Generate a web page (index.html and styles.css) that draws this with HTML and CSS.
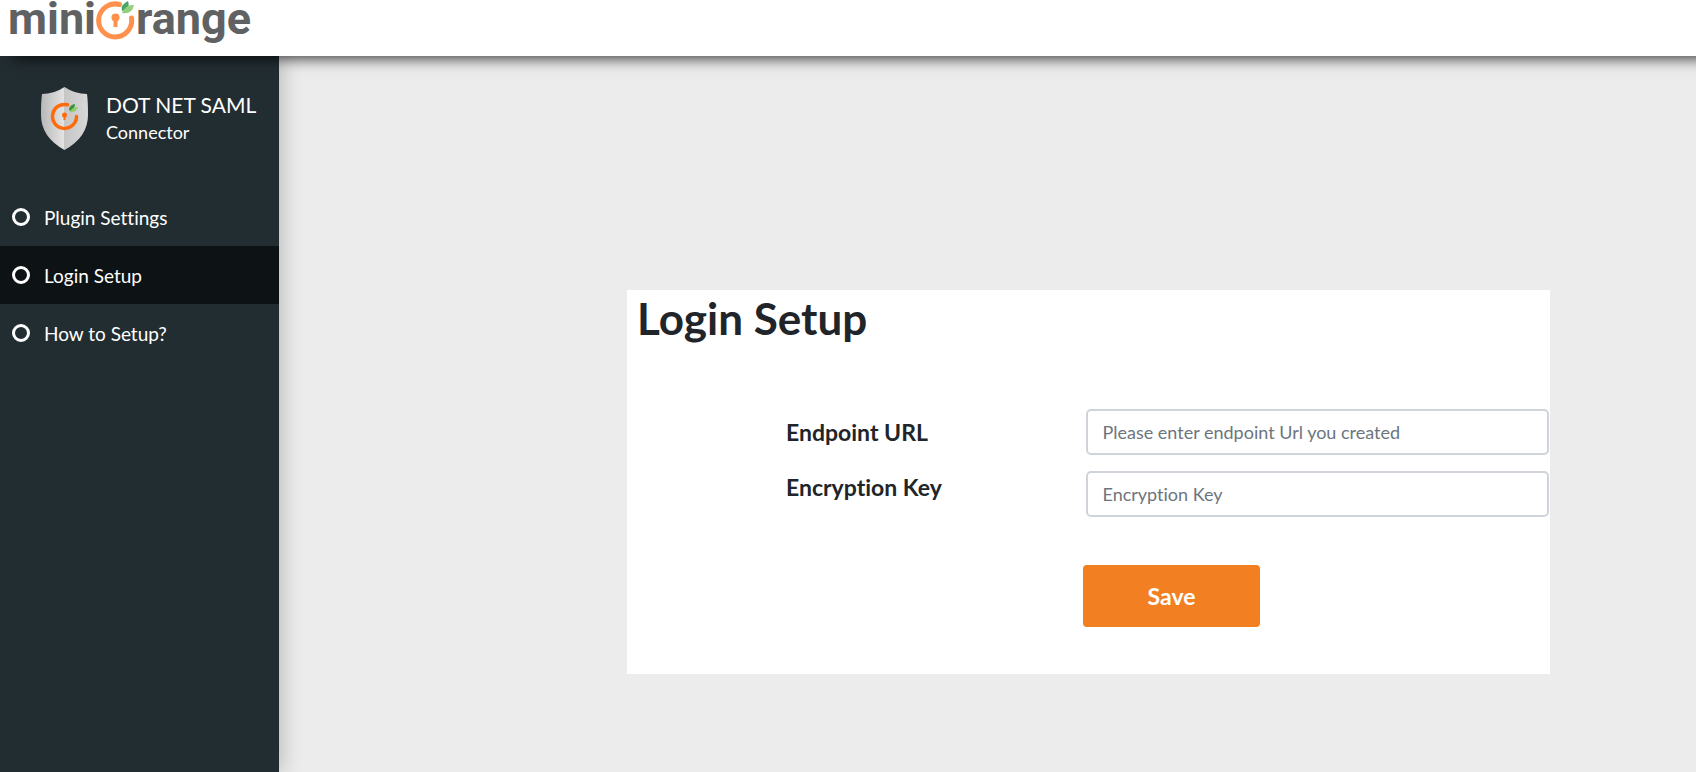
FILE: index.html
```html
<!DOCTYPE html>
<html lang="en">
<head>
<meta charset="utf-8">
<meta name="viewport" content="width=device-width, initial-scale=1">
<title>Login Setup - miniOrange</title>
<link rel="stylesheet" href="styles.css">
</head>
<body>
<header class="topbar">
  <div class="logo">
    <span>mini</span>
    <svg class="logo-mark" viewBox="0 0 40 42" role="img" aria-label="O">
      <path d="M23.500 4.500A16.500 16.500 0 1 0 35.500 18" fill="none" stroke="#ff914d" stroke-width="5" stroke-linecap="round"/>
      <circle cx="19.500" cy="17.500" r="4" fill="#ff914d"/>
      <path d="M17.500 18h4v9h-4z" fill="#ff914d"/>
      <path d="M26 11Q24 5 32 1Q34 7 30 10Z" fill="#4aa564"/>
      <path d="M26 13Q30 4 38 5Q36 15 26 13Z" fill="#93d07c"/>
    </svg>
    <span>range</span>
  </div>
</header>
<div class="layout">
  <aside class="sidebar">
    <div class="brand">
      <svg class="shield" viewBox="0 0 47 63" aria-hidden="true">
        <defs>
          <linearGradient id="steel">
            <stop offset="0" stop-color="#b8b8b8"/>
            <stop offset=".5" stop-color="#e4e4e4"/>
            <stop offset=".5" stop-color="#c6c6c6"/>
            <stop offset="1" stop-color="#d8d8d8"/>
          </linearGradient>
        </defs>
        <path d="M23.500 0Q34 7 46 7Q47 14 47 28Q47 50 23.500 63Q0 50 0 28Q0 14 1 7Q13 7 23.500 0Z" fill="url(#steel)"/>
        <path d="M26.500 17.800A12 12 0 1 0 35.500 29.500" fill="none" stroke="#ff6a0a" stroke-width="3.500" stroke-linecap="round"/>
        <circle cx="23.500" cy="28" r="2.500" fill="#ff6a0a"/>
        <path d="M22.500 28h2v5h-2z" fill="#ff6a0a"/>
        <path d="M28 23Q28 18 34 17Q34 21 30 24Z" fill="#3f8f3b"/>
        <path d="M29 25Q31 20 37 20Q35 26 29 25Z" fill="#8fd06a"/>
      </svg>
      <div class="brand-text">
        <div class="brand-name">DOT NET SAML</div>
        <div class="brand-sub">Connector</div>
      </div>
    </div>
    <nav class="menu">
      <a class="menu-item" href="#settings"><span class="ring"></span>Plugin Settings</a>
      <a class="menu-item active" href="#login" aria-current="page"><span class="ring"></span>Login Setup</a>
      <a class="menu-item" href="#how-to"><span class="ring"></span>How to Setup?</a>
    </nav>
  </aside>
  <main class="content">
    <form class="card">
      <h1 class="title">Login Setup</h1>
      <div class="fields">
        <div class="labels">
          <label for="endpoint">Endpoint URL</label>
          <label for="key">Encryption Key</label>
        </div>
        <div class="inputs">
          <input id="endpoint" type="text" placeholder="Please enter endpoint Url you created">
          <input id="key" type="text" placeholder="Encryption Key">
        </div>
      </div>
      <div class="actions">
        <button class="save" type="button">Save</button>
      </div>
    </form>
  </main>
</div>
</body>
</html>
```
FILE: styles.css
```css
* {
  box-sizing: border-box;
}

body {
  margin: 0;
  min-height: 100vh;
  display: flex;
  flex-direction: column;
  background: #ececec;
  color: #212529;
  font-family: Lato, sans-serif;
  font-size: 19px;
  font-variant-ligatures: none;
}

.topbar {
  position: relative;
  z-index: 2;
  height: 56px;
  padding-left: 8px;
  background: #fff;
  box-shadow: 14px 2px 14px rgba(0, 0, 0, 0.8);
}

.logo {
  display: flex;
  color: #606163;
  font-family: Roboto, sans-serif;
  font-size: 45px;
  font-weight: 700;
  line-height: 38px;
}

.logo-mark {
  width: 40px;
  height: 42px;
}

.layout {
  flex: 1;
  display: flex;
}

.sidebar {
  flex: none;
  width: 279px;
  background: #222d32;
  color: #fff;
  box-shadow: 2px 0 20px rgba(0, 0, 0, 0.24);
}

.brand {
  display: flex;
  gap: 18px;
  padding: 31px 0 38px 41px;
}

.shield {
  width: 47px;
  height: 63px;
}

.brand-text {
  padding-top: 4px;
}

.brand-name {
  font-size: 21px;
  line-height: 28px;
}

.brand-sub {
  font-size: 18px;
  line-height: 26px;
}

.menu-item {
  display: flex;
  align-items: center;
  gap: 14px;
  height: 58px;
  padding-left: 12px;
  color: #fff;
  text-decoration: none;
}

.menu-item.active {
  background: #0d1214;
}

.ring {
  width: 18px;
  height: 18px;
  border: 3px solid #fff;
  border-radius: 50%;
}

.content {
  flex: 1;
  display: grid;
  grid-template-columns: 348fr 923fr 146fr;
  align-items: start;
  padding-top: 234px;
}

.card {
  grid-column: 2;
  padding-bottom: 47px;
  background: #fff;
}

.title {
  margin: 0;
  padding: 0 10px;
  font-size: 44px;
  font-weight: 700;
  line-height: 56px;
}

.fields,
.actions {
  display: grid;
  grid-template-columns: 459fr 464fr;
}

.fields {
  padding: 63px 1px 0 0;
}

.labels,
.inputs {
  display: flex;
  flex-direction: column;
}

.labels {
  gap: 9px;
  padding-left: 159px;
  font-size: 23px;
  font-weight: 700;
  line-height: 46px;
}

.inputs {
  gap: 16px;
}

.inputs input {
  width: 100%;
  height: 46px;
  padding: 0 15px;
  border: 2px solid #ced4da;
  border-radius: 5px;
  color: #495057;
  font: 18px Lato, sans-serif;
  font-variant-ligatures: none;
}

.inputs input::placeholder {
  color: #6c757d;
  opacity: 1;
}

.actions {
  padding-top: 48px;
}

.save {
  grid-column: 2;
  justify-self: start;
  width: 177px;
  height: 62px;
  margin-left: -3px;
  border: 0;
  border-radius: 4px;
  background: #f27f21;
  color: #fff;
  font: 700 23px Lato, sans-serif;
}
```
